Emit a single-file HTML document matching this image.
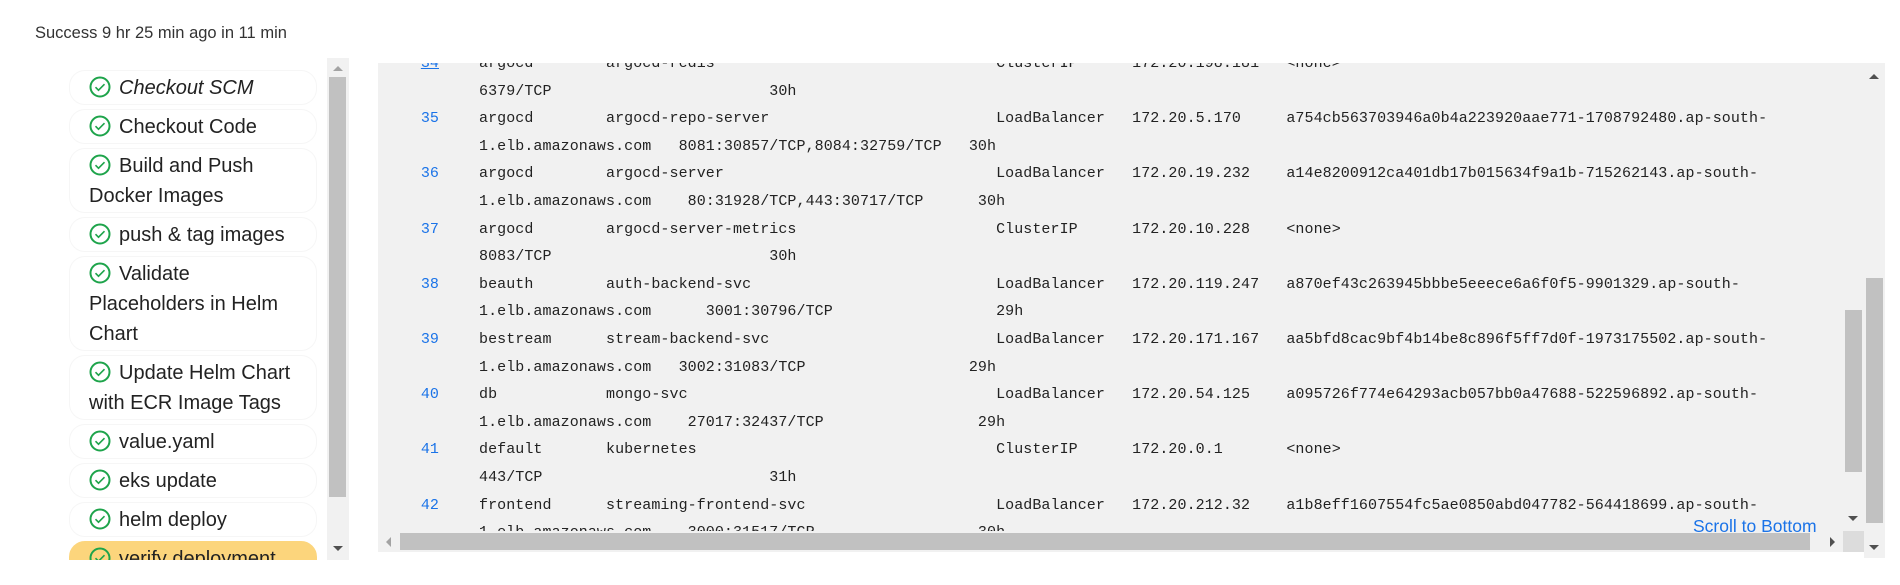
<!DOCTYPE html>
<html><head><meta charset="utf-8"><style>
*{margin:0;padding:0;box-sizing:border-box}
body{width:1900px;height:585px;background:#fff;position:relative;overflow:hidden;font-family:"Liberation Sans",sans-serif;color:#222}
.abs{position:absolute}
#succ{left:35px;top:24px;font-size:16.5px;color:#333}
#side{left:69px;top:63px;width:250px;height:497px;overflow:hidden}
.it{border:1px solid #f6f6f6;border-radius:16px;padding:2px 4px 1px 19px;line-height:30px;font-size:20px;margin-bottom:4px;width:248px;color:#222}
.it svg{vertical-align:-4px;margin-right:8px}
.it.y{background:#fcd57c;border-color:#fcd57c}
.sb{background:#f1f1f1}
.th{background:#c1c1c1}
.tri{width:0;height:0;position:absolute}
.dn{border-left:5px solid transparent;border-right:5px solid transparent;border-top:5px solid #505050}
.up{border-left:5px solid transparent;border-right:5px solid transparent;border-bottom:5px solid #a3a3a3}
#panel{left:378px;top:63px;width:1465px;height:468px;background:#f1f1f1;overflow:hidden}
.ln{position:absolute;left:0;height:27.6px;line-height:27.6px;font-family:"Liberation Mono",monospace;font-size:15px;letter-spacing:0.07px;color:#222;white-space:pre}
.n{position:absolute;width:61px;text-align:right;left:0;color:#1a73e8}
.t{position:absolute;left:101px}
</style></head><body>
<div id="succ" class="abs">Success 9 hr 25 min ago in 11 min</div>

<div id="side" class="abs">
<div style="height:7px"></div>
<div class="it"><svg width="22" height="22" viewBox="0 0 22 22"><circle cx="11" cy="11" r="9.5" fill="none" stroke="#1ea44b" stroke-width="2"/><path d="M6.5 11.2l3 3 6-6" fill="none" stroke="#1ea44b" stroke-width="1.6"/></svg><i>Checkout SCM</i></div>
<div class="it"><svg width="22" height="22" viewBox="0 0 22 22"><circle cx="11" cy="11" r="9.5" fill="none" stroke="#1ea44b" stroke-width="2"/><path d="M6.5 11.2l3 3 6-6" fill="none" stroke="#1ea44b" stroke-width="1.6"/></svg>Checkout Code</div>
<div class="it"><svg width="22" height="22" viewBox="0 0 22 22"><circle cx="11" cy="11" r="9.5" fill="none" stroke="#1ea44b" stroke-width="2"/><path d="M6.5 11.2l3 3 6-6" fill="none" stroke="#1ea44b" stroke-width="1.6"/></svg>Build and Push<br>Docker Images</div>
<div class="it"><svg width="22" height="22" viewBox="0 0 22 22"><circle cx="11" cy="11" r="9.5" fill="none" stroke="#1ea44b" stroke-width="2"/><path d="M6.5 11.2l3 3 6-6" fill="none" stroke="#1ea44b" stroke-width="1.6"/></svg>push &amp; tag images</div>
<div class="it"><svg width="22" height="22" viewBox="0 0 22 22"><circle cx="11" cy="11" r="9.5" fill="none" stroke="#1ea44b" stroke-width="2"/><path d="M6.5 11.2l3 3 6-6" fill="none" stroke="#1ea44b" stroke-width="1.6"/></svg>Validate<br>Placeholders in Helm<br>Chart</div>
<div class="it"><svg width="22" height="22" viewBox="0 0 22 22"><circle cx="11" cy="11" r="9.5" fill="none" stroke="#1ea44b" stroke-width="2"/><path d="M6.5 11.2l3 3 6-6" fill="none" stroke="#1ea44b" stroke-width="1.6"/></svg>Update Helm Chart<br>with ECR Image Tags</div>
<div class="it"><svg width="22" height="22" viewBox="0 0 22 22"><circle cx="11" cy="11" r="9.5" fill="none" stroke="#1ea44b" stroke-width="2"/><path d="M6.5 11.2l3 3 6-6" fill="none" stroke="#1ea44b" stroke-width="1.6"/></svg>value.yaml</div>
<div class="it"><svg width="22" height="22" viewBox="0 0 22 22"><circle cx="11" cy="11" r="9.5" fill="none" stroke="#1ea44b" stroke-width="2"/><path d="M6.5 11.2l3 3 6-6" fill="none" stroke="#1ea44b" stroke-width="1.6"/></svg>eks update</div>
<div class="it"><svg width="22" height="22" viewBox="0 0 22 22"><circle cx="11" cy="11" r="9.5" fill="none" stroke="#1ea44b" stroke-width="2"/><path d="M6.5 11.2l3 3 6-6" fill="none" stroke="#1ea44b" stroke-width="1.6"/></svg>helm deploy</div>
<div class="it y"><svg width="22" height="22" viewBox="0 0 22 22"><circle cx="11" cy="11" r="9.5" fill="none" stroke="#1ea44b" stroke-width="2"/><path d="M6.5 11.2l3 3 6-6" fill="none" stroke="#1ea44b" stroke-width="1.6"/></svg>verify deployment</div>
</div>
<!-- sidebar scrollbar -->
<div class="abs sb" style="left:327px;top:58px;width:22px;height:502px"></div>
<div class="abs th" style="left:329px;top:77px;width:17px;height:420px"></div>
<div class="tri up abs" style="left:333px;top:66px"></div>
<div class="tri dn abs" style="left:333px;top:546px"></div>

<div id="panel" class="abs">
<div class="ln" style="top:-13px"><span class="n" style="text-decoration:underline">34</span><span class="t">argocd        argocd-redis                               ClusterIP      172.20.198.181   &lt;none&gt;</span></div>
<div class="ln" style="top:14.6px"><span class="t">6379/TCP                        30h</span></div>
<div class="ln" style="top:42.2px"><span class="n">35</span><span class="t">argocd        argocd-repo-server                         LoadBalancer   172.20.5.170     a754cb563703946a0b4a223920aae771-1708792480.ap-south-</span></div>
<div class="ln" style="top:69.8px"><span class="t">1.elb.amazonaws.com   8081:30857/TCP,8084:32759/TCP   30h</span></div>
<div class="ln" style="top:97.4px"><span class="n">36</span><span class="t">argocd        argocd-server                              LoadBalancer   172.20.19.232    a14e8200912ca401db17b015634f9a1b-715262143.ap-south-</span></div>
<div class="ln" style="top:125px"><span class="t">1.elb.amazonaws.com    80:31928/TCP,443:30717/TCP      30h</span></div>
<div class="ln" style="top:152.6px"><span class="n">37</span><span class="t">argocd        argocd-server-metrics                      ClusterIP      172.20.10.228    &lt;none&gt;</span></div>
<div class="ln" style="top:180.2px"><span class="t">8083/TCP                        30h</span></div>
<div class="ln" style="top:207.8px"><span class="n">38</span><span class="t">beauth        auth-backend-svc                           LoadBalancer   172.20.119.247   a870ef43c263945bbbe5eeece6a6f0f5-9901329.ap-south-</span></div>
<div class="ln" style="top:235.4px"><span class="t">1.elb.amazonaws.com      3001:30796/TCP                  29h</span></div>
<div class="ln" style="top:263px"><span class="n">39</span><span class="t">bestream      stream-backend-svc                         LoadBalancer   172.20.171.167   aa5bfd8cac9bf4b14be8c896f5ff7d0f-1973175502.ap-south-</span></div>
<div class="ln" style="top:290.6px"><span class="t">1.elb.amazonaws.com   3002:31083/TCP                  29h</span></div>
<div class="ln" style="top:318.2px"><span class="n">40</span><span class="t">db            mongo-svc                                  LoadBalancer   172.20.54.125    a095726f774e64293acb057bb0a47688-522596892.ap-south-</span></div>
<div class="ln" style="top:345.8px"><span class="t">1.elb.amazonaws.com    27017:32437/TCP                 29h</span></div>
<div class="ln" style="top:373.4px"><span class="n">41</span><span class="t">default       kubernetes                                 ClusterIP      172.20.0.1       &lt;none&gt;</span></div>
<div class="ln" style="top:401px"><span class="t">443/TCP                         31h</span></div>
<div class="ln" style="top:428.6px"><span class="n">42</span><span class="t">frontend      streaming-frontend-svc                     LoadBalancer   172.20.212.32    a1b8eff1607554fc5ae0850abd047782-564418699.ap-south-</span></div>
<div class="ln" style="top:456.2px"><span class="t">1.elb.amazonaws.com    3000:31517/TCP                  30h</span></div>
</div>
<!-- horizontal scrollbar -->
<div class="abs sb" style="left:378px;top:531px;width:1465px;height:21px"></div>
<div class="abs th" style="left:400px;top:533px;width:1410px;height:17px"></div>
<div class="tri abs" style="left:386px;top:537px;border-top:5px solid transparent;border-bottom:5px solid transparent;border-right:5px solid #a3a3a3"></div>
<div class="tri abs" style="left:1830px;top:537px;border-top:5px solid transparent;border-bottom:5px solid transparent;border-left:5px solid #505050"></div>
<div class="abs" style="left:1843px;top:531px;width:21px;height:21px;background:#dcdcdc"></div>
<!-- inner vertical scrollbar -->
<div class="abs sb" style="left:1843px;top:63px;width:21px;height:468px"></div>
<div class="abs th" style="left:1845px;top:310px;width:17px;height:162px"></div>
<div class="tri dn abs" style="left:1848px;top:516px"></div>
<!-- outer scrollbar -->
<div class="abs sb" style="left:1864px;top:63px;width:21px;height:495px"></div>
<div class="abs th" style="left:1866px;top:278px;width:17px;height:245px"></div>
<div class="tri abs" style="left:1869px;top:74px;border-left:5px solid transparent;border-right:5px solid transparent;border-bottom:5px solid #505050"></div>
<div class="tri dn abs" style="left:1869px;top:545px"></div>
<div class="abs" style="left:1693px;top:516px;font-size:17.5px;color:#1a73e8">Scroll to Bottom</div>
</body></html>
